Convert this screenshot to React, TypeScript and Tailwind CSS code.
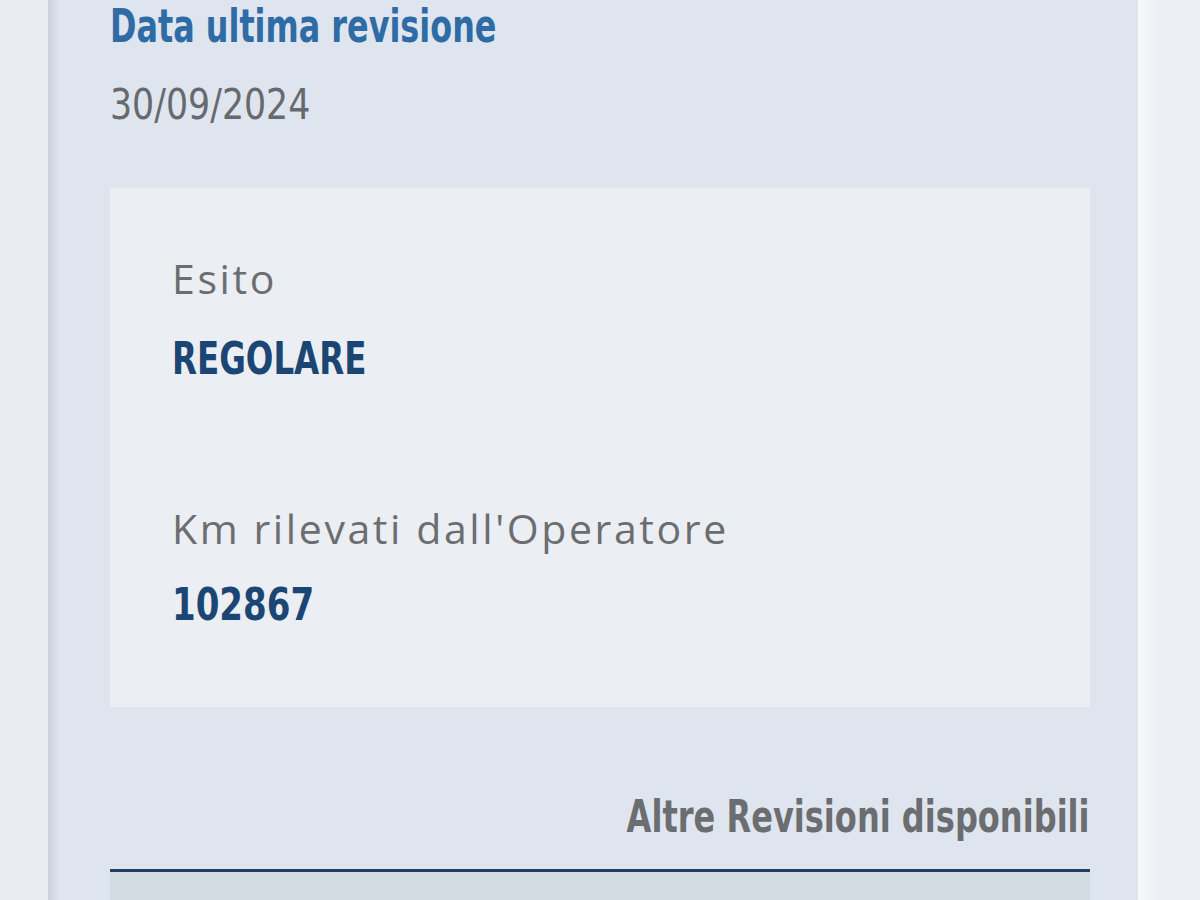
export default function App() {
  const narrow = { fontFamily: '"DejaVu Sans Condensed", "Liberation Sans", sans-serif' };
  const body = { fontFamily: '"Open Sans", "Noto Sans", sans-serif' };

  return (
    <div className="flex h-[900px] w-[1200px] overflow-hidden bg-[#eceff3]">
      <div className="w-[48px] shrink-0 bg-[#e9edf2]" />
      <div className="w-[10px] shrink-0 bg-gradient-to-r from-[#c9d1db] to-[#dbe2eb]" />
      <div className="flex w-[1080px] shrink-0 flex-col bg-[#dee5ee] pl-[52px] pr-[48px]">
        <h2
          className="mt-[2px] inline-block origin-left scale-x-[0.77] text-[46px] font-bold leading-[48px] text-[#2f6ba5]"
          style={narrow}
        >
          Data ultima revisione
        </h2>
        <p
          className="mt-[33px] inline-block origin-left scale-x-[0.92] text-[42px] leading-[44px] text-[#666a6e]"
          style={narrow}
        >
          30/09/2024
        </p>
        <div className="mt-[61px] flex h-[519px] shrink-0 flex-col bg-[#ebeef3] pl-[62px] pt-[65px]">
          <span className="text-[41px] leading-[50px] tracking-[2.6px] text-[#6b6d70]" style={body}>
            Esito
          </span>
          <span
            className="mt-[32px] inline-block origin-left scale-x-[0.82] text-[44px] font-bold leading-[48px] text-[#1b4674]"
            style={narrow}
          >
            REGOLARE
          </span>
          <span className="mt-[120px] text-[41px] leading-[50px] tracking-[2.6px] text-[#6b6d70]" style={body}>
            Km rilevati dall'Operatore
          </span>
          <span
            className="mt-[28px] inline-block origin-left scale-x-[0.86] text-[44px] font-bold leading-[48px] text-[#1b4674]"
            style={narrow}
          >
            102867
          </span>
        </div>
        <p
          className="mt-[86px] inline-block shrink-0 origin-right scale-x-[0.81] self-end text-[44px] font-bold leading-[48px] text-[#6b6d70]"
          style={narrow}
        >
          Altre Revisioni disponibili
        </p>
        <div className="mt-[28px] h-[3px] shrink-0 bg-[#1f3f63]" />
        <div className="h-[40px] shrink-0 bg-[#d3dbe3]" />
      </div>
      <div className="w-[18px] shrink-0 bg-gradient-to-r from-[#f7f8fa] to-[#eef1f4]" />
    </div>
  );
}
